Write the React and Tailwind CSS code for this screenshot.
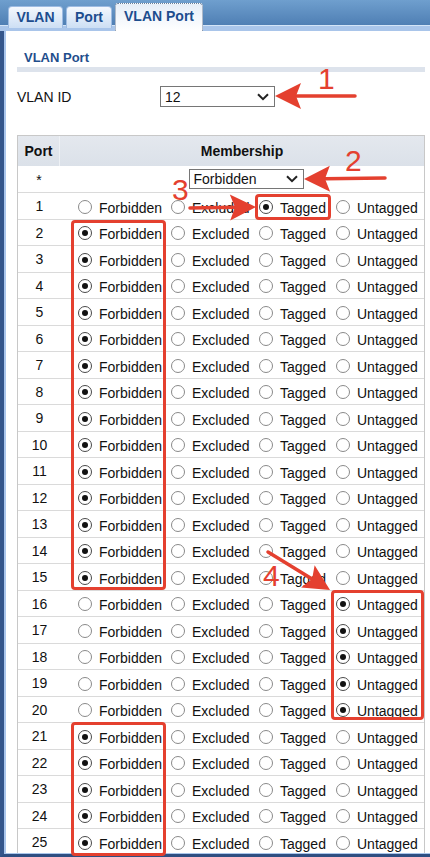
import React from "react";

const RED = "#e4402f";

function Radio({ checked }) {
  return (
    <span
      className={`flex h-[14px] w-[14px] shrink-0 items-center justify-center rounded-full border bg-white ${
        checked ? "border-[#4a4a4a]" : "border-[#8a8a8a]"
      }`}
    >
      {checked && <span className="h-[6px] w-[6px] rounded-full bg-[#111]" />}
    </span>
  );
}

function Option({ label, checked, w }) {
  return (
    <div className={`flex items-center gap-[7px] ${w}`}>
      <Radio checked={checked} />
      <span className="whitespace-nowrap pt-[3px]">{label}</span>
    </div>
  );
}

function Chevron() {
  return (
    <svg width="12" height="8" viewBox="0 0 12 8" className="shrink-0">
      <path d="M1 1.2 L6 6.2 L11 1.2" fill="none" stroke="#222" strokeWidth="2" />
    </svg>
  );
}

function arrowParts(x1, y1, x2, y2) {
  const dx = x2 - x1;
  const dy = y2 - y1;
  const len = Math.hypot(dx, dy);
  const ux = dx / len;
  const uy = dy / len;
  const px = -uy;
  const py = ux;
  const L = 26;
  const W = 13;
  const bx = x2 - ux * L;
  const by = y2 - uy * L;
  const nx = x2 - ux * (L - 5);
  const ny = y2 - uy * (L - 5);
  const pts = [
    [x2, y2],
    [bx + px * W, by + py * W],
    [nx, ny],
    [bx - px * W, by - py * W],
  ]
    .map((p) => p.join(","))
    .join(" ");
  return { line: [x1, y1, nx, ny], pts };
}

function Arrow({ x1, y1, x2, y2 }) {
  const a = arrowParts(x1, y1, x2, y2);
  return (
    <g>
      <line
        x1={a.line[0]}
        y1={a.line[1]}
        x2={a.line[2]}
        y2={a.line[3]}
        stroke={RED}
        strokeWidth="3.5"
        strokeLinecap="round"
      />
      <polygon points={a.pts} fill={RED} />
    </g>
  );
}

const rows = Array.from({ length: 25 }, (_, i) => {
  const n = i + 1;
  let sel = "Forbidden";
  if (n === 1) sel = "Tagged";
  else if (n >= 16 && n <= 20) sel = "Untagged";
  return { n, sel };
});

export default function App() {
  return (
    <div className="relative flex h-[857px] w-[430px] flex-col overflow-hidden bg-white font-['Liberation_Sans',Arial,sans-serif] text-[14px] text-[#111]">
      {/* top bar with tabs */}
      <div className="flex h-[31px] shrink-0 items-end gap-[3px] bg-[linear-gradient(to_bottom,#6f9fce_0px,#4f7fb4_25px,#d3e4f7_25px,#d3e4f7_26px,#a9c5ea_26px,#a9c5ea_31px)] pl-[8px]">
        <div className="mb-[3px] flex h-[22px] w-[55px] justify-center rounded-t-[4px] border border-b-0 border-[#9dbbe2] bg-gradient-to-b from-[#f4f8fd] to-[#cddff4] pt-[2px] text-[14px] font-bold leading-[16px] text-[#1d4d8e]">
          VLAN
        </div>
        <div className="mb-[3px] flex h-[22px] w-[46px] justify-center rounded-t-[4px] border border-b-0 border-[#9dbbe2] bg-gradient-to-b from-[#f4f8fd] to-[#cddff4] pt-[2px] text-[14px] font-bold leading-[16px] text-[#1d4d8e]">
          Port
        </div>
        <div className="flex h-[28px] w-[88px] justify-center rounded-t-[3px] border border-b-0 border-dotted border-[#6d7f97] bg-gradient-to-b from-[#e6eef8] to-white pt-[4px] text-[14px] font-bold leading-[16px] text-[#1d4d8e]">
          VLAN Port
        </div>
      </div>

      {/* body frame */}
      <div className="flex min-h-0 flex-1 border-b-[3px] border-l-[4px] border-b-[#2e4f82] border-l-[#34568b]">
        <div className="flex min-h-0 flex-1 flex-col overflow-hidden border-b border-l-2 border-b-[#a9c5ea] border-l-[#aac6ec] pl-[11px] pr-[5px]">
          <div className="pl-[7px] pt-[19px] text-[13px] font-bold leading-[15px] text-[#1f4e8c]">
            VLAN Port
          </div>
          <div className="mt-[2px] h-[5px] shrink-0 bg-[#dde3ec]" />

          <div className="mt-[14px] flex h-[21px] shrink-0 items-center">
            <span className="w-[143px] pt-[1px]">VLAN ID</span>
            <div className="flex h-[21px] w-[115px] items-center justify-between border border-[#767676] bg-white pl-[4px] pr-[5px]">
              <span className="pt-[1px]">12</span>
              <Chevron />
            </div>
          </div>

          {/* table */}
          <div className="mt-[28px] shrink-0 border border-[#c8c8c8]">
            <div className="flex h-[30px] items-center bg-gradient-to-b from-[#e4e8ee] to-[#dbe1e9] font-bold">
              <div className="flex h-full w-[42px] items-center justify-center border-r border-[#eef1f5]">
                Port
              </div>
              <div className="flex-1 text-center">Membership</div>
            </div>
            <div className="flex h-[27px] items-center border-b border-[#dadada]">
              <div className="w-[42px] pt-[3px] text-center">*</div>
              <div className="flex flex-1 justify-center pl-[8px]">
                <div className="flex h-[20px] w-[115px] items-center justify-between border border-[#767676] bg-white pl-[4px] pr-[5px]">
                  <span className="pt-[1px]">Forbidden</span>
                  <Chevron />
                </div>
              </div>
            </div>
            {rows.map((r) => (
              <div
                key={r.n}
                className="flex h-[26.5px] items-center border-b border-[#dadada]"
              >
                <div className="w-[42px] pl-[1px] pt-[2px] text-center">{r.n}</div>
                <div className="flex flex-1 items-center pl-[18px] pt-[2px]">
                  <Option label="Forbidden" checked={r.sel === "Forbidden"} w="w-[93px]" />
                  <Option label="Excluded" checked={false} w="w-[88px]" />
                  <Option label="Tagged" checked={r.sel === "Tagged"} w="w-[77px]" />
                  <Option label="Untagged" checked={r.sel === "Untagged"} w="" />
                </div>
              </div>
            ))}
          </div>
        </div>
      </div>

      {/* annotations */}
      <div className="pointer-events-none absolute left-[255px] top-[194px] h-[26px] w-[76px] rounded-[4px] border-[3px] border-[#e4402f]" />
      <div className="pointer-events-none absolute left-[71px] top-[220px] h-[370px] w-[95px] rounded-[4px] border-[3px] border-[#e4402f]" />
      <div className="pointer-events-none absolute left-[331px] top-[590px] h-[130px] w-[93px] rounded-[4px] border-[3px] border-[#e4402f]" />
      <div className="pointer-events-none absolute left-[71px] top-[722px] h-[134px] w-[95px] rounded-[4px] border-[3px] border-[#e4402f]" />

      <svg
        className="pointer-events-none absolute left-0 top-0"
        width="430"
        height="857"
        viewBox="0 0 430 857"
      >
        <Arrow x1={355} y1={96} x2={275} y2={96} />
        <Arrow x1={385} y1={178} x2={304} y2={179} />
        <Arrow x1={190} y1={208} x2={256} y2={207} />
        <Arrow x1={268} y1={552} x2={330} y2={590} />
      </svg>

      <span className="pointer-events-none absolute left-[318px] top-[64px] text-[30px] leading-[30px] text-[#e4402f]">
        1
      </span>
      <span className="pointer-events-none absolute left-[345px] top-[146px] text-[30px] leading-[30px] text-[#e4402f]">
        2
      </span>
      <span className="pointer-events-none absolute left-[172px] top-[175px] text-[30px] leading-[30px] text-[#e4402f]">
        3
      </span>
      <span className="pointer-events-none absolute left-[263px] top-[561px] text-[30px] leading-[30px] text-[#e4402f]">
        4
      </span>
    </div>
  );
}
